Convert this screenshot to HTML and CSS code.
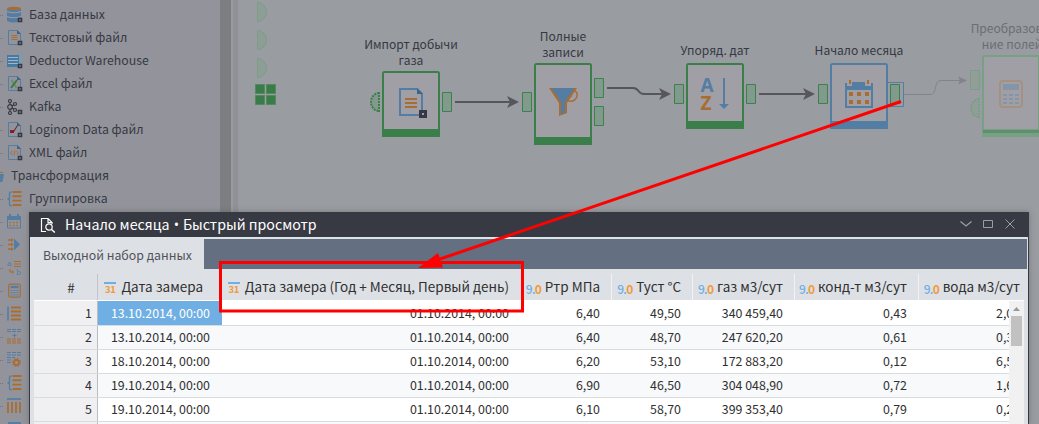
FILE: index.html
```html
<!DOCTYPE html>
<html lang="ru"><head><meta charset="utf-8"><title>Начало месяца</title><link rel="stylesheet" href="styles.css"></head>
<body>
<svg width="0" height="0" class="defs"><defs>
<g id="corner"><path d="M11.5 11.5h3v3h-3z" fill="#8d8f98" stroke="#363943" stroke-width="1.6"/></g>
<g id="file"><path d="M1.5 .5h9l3 3v11h-12z" fill="none" stroke="#537da3"/><path d="M10 0v4h4z" fill="#3d6689"/></g>
<g id="group"><path d="M4.500 1Q2.500 1 2.500 3V6Q2.500 8 .5 8Q2.500 8 2.500 10V13Q2.500 15 4.500 15" fill="none" stroke="#537da3" stroke-width="1.300"/><path d="M5.500 1h9M5.500 5.200h9M5.500 9.600h9M5.500 14h9" stroke="#a86d32" stroke-width="1.900"/></g>
<g id="calc"><rect x="1.700" y="1.200" width="11.600" height="13" rx="1.500" fill="none" stroke="#a86d32" stroke-width="1.200"/><path d="M3.500 4h8" stroke="#537da3" stroke-width="2.500"/><path d="M3.500 7.500h8M3.500 9.700h8M3.500 12h8" stroke="#537da3" stroke-width="1.200" stroke-dasharray="2 1"/></g>
</defs></svg>
<main class="app">
<aside class="tree">
<ul class="items">
<li class="cut"><svg class="ic" viewBox="0 0 16 16"><ellipse cx="7" cy="13" rx="4" ry="2.500" fill="#a99645"/></svg></li>
<li><svg class="ic" viewBox="0 0 16 16"><path d="M0 2v12q7 3 14 0V2z" fill="#537da3"/><ellipse cx="7" cy="1.500" rx="7" ry="1.700" fill="#a86d32"/><path d="M0 4.500q7 2.500 14 0M0 9.500q7 2.500 14 0" fill="none" stroke="#9a9ca4" stroke-width="1.200"/><use href="#corner"/></svg>База данных</li>
<li><svg class="ic" viewBox="0 0 16 16"><use href="#file"/><path d="M4.500 5.500h6M4.500 7.500h6M4.500 9.500h6" stroke="#a86d32" stroke-width="1.200"/><use href="#corner"/></svg>Текстовый файл</li>
<li><svg class="ic" viewBox="0 0 16 16"><path d="M0 2h12v12H0z" fill="#457ba4"/><path d="M12 2l2-2v12l-2 2z" fill="#6fa0b8"/><path d="M1 4.500h10M1 7.500h10M1 10.500h10" stroke="#a3b5c2"/><use href="#corner"/></svg>Deductor Warehouse</li>
<li><svg class="ic" viewBox="0 0 16 16"><use href="#file"/><path d="M4.500 4l5 8" stroke="#6d9354" stroke-width="2"/><path d="M10 4l-6 8" stroke="#3e7457" stroke-width="2"/><use href="#corner"/></svg>Excel файл</li>
<li><svg class="ic" viewBox="0 0 16 16"><g fill="none" stroke="#363943" stroke-width="1.200"><circle cx="3" cy="8" r="2.300"/><circle cx="3" cy="2" r="1.500"/><circle cx="3" cy="14" r="1.500"/><circle cx="8" cy="5" r="1.500"/><circle cx="8" cy="11" r="1.500"/><path d="M3 3.500v2M3 10.300v2M5 7l1.700-1M5 9l1.700 1"/></g><use href="#corner"/></svg>Kafka</li>
<li><svg class="ic" viewBox="0 0 16 16"><use href="#file"/><path d="M3 8h4v3H3z" fill="#841e2c"/><path d="M6 10.500l4.500-7" stroke="#841e2c" stroke-width="1.100"/><use href="#corner"/></svg>Loginom Data файл</li>
<li><svg class="ic" viewBox="0 0 16 16"><use href="#file"/><path d="M5.500 6l-2 2 2 2M9.500 6l2 2-2 2M8 5.500l-1 5" fill="none" stroke="#a86d32"/><use href="#corner"/></svg>XML файл</li>
<li class="folder"><svg class="fic" viewBox="0 0 4 14"><path d="M0 3h3v1H0z" fill="#a86d32"/><path d="M0 5h4L2.500 13H0z" fill="#537da3"/></svg>Трансформация</li>
<li><svg class="ic" viewBox="0 0 16 16"><use href="#group"/></svg>Группировка</li>
<li><svg class="ic" viewBox="0 0 16 16"><path d="M.5 3h13v11H.5z" fill="none" stroke="#537da3"/><path d="M0 2h14v4H0zM2 0h2v2H2zM10 0h2v2h-2z" fill="#537da3"/><path d="M2.500 8.500h10M2.500 11.500h10" stroke="#a86d32" stroke-width="1.700" stroke-dasharray="1.700 1.700"/></svg></li>
<li><svg class="ic" viewBox="0 0 16 16"><path d="M7 1.500l6 6-6 6z" fill="#537da3"/><path d="M1 3h5M1 7.500h5M1 12h5" stroke="#a86d32" stroke-width="1.500"/><path d="M4 1l2.500 2L4 5zM4 5.500l2.500 2L4 9.500zM4 10l2.500 2L4 14z" fill="#a86d32"/></svg></li>
<li><svg class="ic" viewBox="0 0 16 16"><path d="M7 1.500h7M7 4h7M7 6.500h7M3 9v3h3" fill="none" stroke="#a86d32" stroke-width="1.200"/><path d="M5 10l2 2-2 2z" fill="#a86d32"/><text x="0" y="6" class="mini">a</text><text x="9" y="15" class="mini">b</text></svg></li>
<li><svg class="ic" viewBox="0 0 16 16"><use href="#calc"/></svg></li>
<li><svg class="ic" viewBox="0 0 16 16"><path d="M1 .5v14" stroke="#537da3" stroke-width="1.600"/><path d="M4 1.500h10M4 5.500h10M4 9.500h10M4 13.500h10" stroke="#a86d32" stroke-width="1.800"/></svg></li>
<li><svg class="ic" viewBox="0 0 16 16"><path d="M0 .5h14M0 2.500h14M7.500 4.500v4M5.500 6.500h4" stroke="#537da3" stroke-dasharray="4 1"/><path d="M0 10h14M0 12h14M0 14h14" stroke="#a86d32" stroke-width="1.200" stroke-dasharray="4 1"/></svg></li>
<li><svg class="ic" viewBox="0 0 16 16"><path d="M0 .5h14M0 3h14M0 5.500h8M0 8h5M0 10.500h4" stroke="#537da3" stroke-dasharray="4 1"/><circle cx="9.500" cy="10.500" r="2.500" fill="none" stroke="#a86d32" stroke-width="1.800"/><circle cx="9.500" cy="10.500" r="3.800" fill="none" stroke="#a86d32" stroke-width="1.300" stroke-dasharray="1.500 1.480"/></svg></li>
<li><svg class="ic" viewBox="0 0 16 16"><use href="#group"/></svg></li>
<li><svg class="ic" viewBox="0 0 16 16"><path d="M0 1h14" stroke="#537da3" stroke-width="1.700"/><path d="M1 4v11M5 4v11M9 4v11M13 4v11" stroke="#a86d32" stroke-width="1.800"/></svg></li>
<li><svg class="ic" viewBox="0 0 16 16"><path d="M1 2h13" stroke="#537da3" stroke-width="2"/></svg></li>
</ul>
</aside>
<div class="track"></div><div class="gutter"></div>
<section class="canvas">
<svg class="wires" viewBox="239 0 800 424" width="800" height="424">
<defs>
<path id="half" d="M257.500 2.500v19a9 9.500 0 0 0 0-19z" fill="#8f9d97" stroke="#77a084"/>
</defs>
<use href="#half"/><use href="#half" y="28"/><use href="#half" y="56"/>
<path d="M255.500 84.500h9v9h-9zM266.500 84.500h9v9h-9zM255.500 95.500h9v9h-9zM266.500 95.500h9v9h-9z" fill="#3a7c49" stroke="#52895f"/>
<g fill="#a09fa6">
<path d="M383 75v-1.500q0-1.500 1.500-1.500h53q1.500 0 1.500 1.500V135h-56z" stroke="#3a7f4a" stroke-width="2"/>
<path d="M535 67v-1.500q0-1.500 1.500-1.500h53q1.500 0 1.500 1.500V143h-56z" stroke="#3a7f4a" stroke-width="2"/>
<path d="M687 67v-1.500q0-1.500 1.500-1.500h53q1.500 0 1.500 1.500V127h-56z" stroke="#3a7f4a" stroke-width="2"/>
<path d="M831 67v-1.500q0-1.500 1.500-1.500h53q1.500 0 1.500 1.500V127h-56z" stroke="#537da3" stroke-width="2"/>
<path d="M983 59v-1.500q0-1.500 1.500-1.500h53q1.500 0 1.500 1.500V135h-56z" stroke="#77a084" stroke-width="2"/></g>
<path d="M382 129h58v8h-58zM534 137h58v8h-58zM686 121h58v8h-58z" fill="#3a7f4a"/>
<path d="M830 121h58v8h-58z" fill="#537da3"/><path d="M982 129h58v8h-58z" fill="#77a084"/><path d="M983 130h57v3h-57z" fill="#5f8f6c"/>
<g fill="#82998d" stroke="#3a8249"><path d="M442.500 92.500h9v19h-9zM522.500 92.500h9v19h-9zM594.500 78.500h9v19h-9zM594.500 106.500h9v19h-9zM674.500 84.500h9v19h-9zM746.500 84.500h9v19h-9zM818.500 84.500h9v19h-9zM890.500 84.500h9v19h-9z"/></g>
<path d="M888 82.500h15.500v24H888" fill="none" stroke="#537da3"/>
<path d="M970.500 70.500h9v19h-9z" fill="#929d99" stroke="#77a084"/>
<path d="M379 92v20M379 93a8 9 0 0 0 0 18" fill="#82998d" stroke="#3a7f4a" stroke-width="2" stroke-dasharray="2 1"/>
<path d="M979 98v20M979 99a8 9 0 0 0 0 18" fill="#929d99" stroke="#77a084" stroke-width="2" stroke-dasharray="2 1"/>
<g fill="none" stroke="#56565c" stroke-width="2"><path d="M455 102h55M607 88h26c7 0 4 6 11 6h18M759 94h47"/></g>
<g fill="#56565c"><path id="tip" d="M519 102l-12-6 3 6-3 6z"/><use href="#tip" x="152" y="-8"/><use href="#tip" x="296" y="-8"/></g>
<path d="M904 94.500h26c8 0 3-14 11-14h22" fill="none" stroke="#838489"/><path d="M967 80.500l-9-4 2 4-2 4z" fill="#838489"/>
<path d="M400 89h17l5 5v21h-22z" fill="none" stroke="#537da3" stroke-width="2"/><path d="M417 88v6h6z" fill="#3d6689"/><path d="M405 99h12M405 103h12M405 107h12" stroke="#a86d32" stroke-width="2"/><path d="M420.500 111.500h5v5h-5z" fill="#a09fa6" stroke="#363943" stroke-width="3"/>
<path d="M567 100.500c6 2.500 11-2 10-7q-1-3-4-3c-3 0-4 4-1 6" fill="none" stroke="#a86d32" stroke-width="1.500"/><path d="M549 88h28L567 103v10l-8 3V103z" fill="#a86d32"/><path d="M551.500 88h23L565 102v3.500l-4 2V102z" fill="#537da3"/><path d="M561 104h4v8.500l-4 2z" fill="#537da3"/>
<text x="700.500" y="92" class="letter" fill="#537da3">A</text><text x="700.500" y="110" class="letter" fill="#a86d32">Z</text><path d="M724 78v27" stroke="#537da3" stroke-width="2"/><path d="M719 104h10l-5 5z" fill="#537da3"/>
<path d="M846 83v24h26V83" fill="none" stroke="#537da3" stroke-width="2"/><path d="M845 86h28v4h-28zM852 82h13v5h-13z" fill="#537da3"/><path d="M849 80h2v4h-2zM867 80h2v4h-2z" fill="#a86d32"/><path d="M849 94h20M849 102h20" stroke="#a86d32" stroke-width="4" stroke-dasharray="4 4"/>
<rect x="1000" y="81" width="22" height="26" rx="3" fill="none" stroke="#a49181" stroke-width="2"/><path d="M1003 84h16v6h-16z" fill="#8495a7"/><path d="M1003 95h16M1003 99h16M1003 103h16" stroke="#8495a7" stroke-width="2" stroke-dasharray="4 2"/>
</svg>
<div class="label l1">Импорт добычи<br>газа</div><div class="label l2">Полные<br>записи</div><div class="label l3">Упоряд. дат</div><div class="label l4">Начало месяца</div><div class="label l5">Преобразова-<br>ние полей</div>
</section>
</main>
<section class="window">
<header class="title"><svg class="preview" width="16" height="16" viewBox="0 0 16 16" fill="none" stroke="#fff"><path d="M6 14.500H1.500v-13H8l4 4V7M8 1.500v4h4" stroke-width="1.200"/><circle cx="9" cy="10" r="3.200" stroke-width="1.200"/><path d="M11.300 12.300l3.500 3.200" stroke-width="1.500"/></svg><h1>Начало месяца <span class="dot">•</span> Быстрый просмотр</h1><svg class="controls" width="58" height="16" viewBox="0 0 58 16" fill="none" stroke="#9c9da0"><path d="M1.500 5.500l5.500 4.500 5.500-4.500" stroke-width="1.300"/><path d="M24.500 4.500h9v7h-9zM46.500 3.500l9 9M55.500 3.500l-9 9"/></svg></header>
<div class="tabs"><div class="tab">Выходной набор данных</div></div>
<div class="grid">
<div class="row head"><div class="num">#</div><div><i class="cal">31</i><span>Дата замера</span></div><div><i class="cal">31</i><span>Дата замера (Год + Месяц, Первый день)</span></div><div><i class="real">9.<b>0</b></i><span>Ртр МПа</span></div><div><i class="real">9.<b>0</b></i><span>Туст °C</span></div><div><i class="real">9.<b>0</b></i><span>газ м3/сут</span></div><div><i class="real">9.<b>0</b></i><span>конд-т м3/сут</span></div><div><i class="real">9.<b>0</b></i><span>вода м3/сут</span></div></div>
<div class="row first"><div class="num">1</div><div class="selected">13.10.2014, 00:00</div><div>01.10.2014, 00:00</div><div>6,40</div><div>49,50</div><div>340 459,40</div><div>0,43</div><div class="last">2,0</div></div>
<div class="row alt"><div class="num">2</div><div>13.10.2014, 00:00</div><div>01.10.2014, 00:00</div><div>6,40</div><div>48,70</div><div>247 620,20</div><div>0,61</div><div class="last">0,3</div></div>
<div class="row"><div class="num">3</div><div>18.10.2014, 00:00</div><div>01.10.2014, 00:00</div><div>6,20</div><div>53,10</div><div>172 883,20</div><div>0,12</div><div class="last">6,5</div></div>
<div class="row alt"><div class="num">4</div><div>19.10.2014, 00:00</div><div>01.10.2014, 00:00</div><div>6,90</div><div>46,50</div><div>304 048,90</div><div>0,72</div><div class="last">1,6</div></div>
<div class="row"><div class="num">5</div><div>19.10.2014, 00:00</div><div>01.10.2014, 00:00</div><div>6,10</div><div>58,70</div><div>399 353,40</div><div>0,79</div><div class="last">0,2</div></div>
<div class="row alt"><div class="num"></div><div></div><div></div><div></div><div></div><div></div><div></div><div></div></div>
<div class="scroll"><svg width="15" height="15"><path d="M4 10l3.500-4L11 10z" fill="#999"/></svg><div class="thumb"></div></div>
</div>
</section>
<svg class="callout" width="1039" height="424"><path d="M901 101.500L440 259" stroke="#f00" stroke-width="3"/><path d="M418 268l20-15 5 14.500z" fill="#f00"/><rect x="220.500" y="262.500" width="302" height="48.500" fill="none" stroke="#f00" stroke-width="3"/></svg>
</body></html>
```
FILE: styles.css
```css
* { box-sizing: border-box; }
body { margin: 0; width: 1039px; height: 424px; overflow: hidden; position: relative; font: 12.4px "Noto Sans CJK SC", "Noto Sans", sans-serif; color: #363943; }
.defs { position: absolute; }
.app { display: flex; height: 424px; overflow: hidden; }
.tree { width: 220px; background: #93949b; overflow: hidden; font-size: 12.3px; }
.items { list-style: none; margin: -20px 0 0; padding: 0; }
.items li { height: 23px; display: flex; align-items: center; gap: 6px; padding: 0 0 1px 7px; white-space: nowrap; background: linear-gradient(90deg, #73757c 1px, transparent 1px 2px, #73757c 2px 3px, transparent 3px) 0 12px / 100% 1px no-repeat; line-height: 22px; }
.items .folder { padding-left: 0; gap: 7px; background: none; }
.ic { width: 16px; height: 16px; flex: none; overflow: visible; margin-top: 2px; }
.fic { width: 4px; height: 14px; flex: none; margin-top: 2px; }
.mini { font: 8px "DejaVu Serif"; fill: #537da3; }
.track { width: 11px; background: #7c7e81; }
.gutter { width: 8px; background: #8f9196; border-left: 2px solid #989a9e; border-right: 1px solid #989a9e; }
.canvas { flex: 1; position: relative; background: #999ca1; overflow: hidden; }
.wires { display: block; }
.letter { font: bold 19px "Open Sans", sans-serif; }
.label { position: absolute; transform: translateX(-50%); text-align: center; white-space: nowrap; line-height: 16px; font-size: 12.05px; }
.l1 { left: 172px; top: 36px; }
.l2 { left: 324px; top: 28px; }
.l3 { left: 476px; top: 42px; }
.l4 { left: 620px; top: 42px; }
.l5 { left: 773px; top: 20px; color: #6c6e75; }
.window { position: absolute; left: 29px; top: 212px; width: 1000px; height: 212px; background: #dde0e5; border: solid #383a43; border-width: 0 1px; box-shadow: 0 0 5px #5558; overflow: hidden; }
.title { height: 25px; background: #383a43; color: #fff; display: flex; align-items: center; padding: 0 11px 0 10px; gap: 9px; }
.controls { margin-bottom: 2px; }
h1 { margin: 0; font-size: 14.2px; font-weight: 400; line-height: 25px; flex: 1; }
.dot { display: inline-block; width: 5px; margin: 0 1px; font-family: "Open Sans", sans-serif; line-height: 1; }
.tabs { height: 32px; border-top: 2px solid #dce4e8; margin-right: 1px; background: #646f81; display: flex; }
.tab { width: 174px; background: #dde0e5; padding-left: 13px; line-height: 33px; height: 30px; color: #50535b; white-space: nowrap; font-size: 12.3px; }
.grid { position: relative; margin: 0 4px; height: 155px; overflow: hidden; }
.row { display: grid; grid-template-columns: 64px 124px 301px 89px 81px 102px 124px 1fr; height: 24px; line-height: 23px; background: #fff; border-bottom: 1px solid #d8dce1; }
.row > div { text-align: right; padding-right: 12px; white-space: nowrap; color: #303030; }
.row > div:nth-child(3) { padding-right: 14px; }
.row.first { height: 25px; line-height: 24px; }
.row.alt { background: #f7f9fb; }
.row > .num { background: #f0f0f2; border-right: 1px solid #b9bdc4; padding-right: 5px; }
.row > .selected { background: #70afe3; color: #fff; }
.row > .last { text-align: left; padding: 0 0 0 77px; }
.row.head { height: 32px; font-size: 13.5px; background: #dde0e5; border-bottom: 1px solid #fff; }
.row.head > div { display: flex; justify-content: flex-end; align-items: center; gap: 5px; border-right: 1px solid #f0f2f4; margin-top: 5px; height: 26px; padding-right: 11px; color: #303030; }
.row.head > div:nth-child(3) { padding-right: 13px; }
.row.head > div:nth-child(2) { padding-right: 18px; }
.row.head > div:last-child { border: 0; padding-right: 4px; }
.row.head > .num { justify-content: center; background: none; padding: 0 0 0 11px; border-color: #c1c5cb; }
.row.head span { line-height: 24px; padding-bottom: 2px; }
.cal { font: bold 9.5px/11px "Noto Sans CJK SC", sans-serif; color: #f09a3b; border-top: 2px solid #70afe3; width: 12px; height: 12px; display: flex; justify-content: center; letter-spacing: -.3px; margin-top: 2px; }
.real { font: 500 12px/14px "Noto Sans CJK SC", sans-serif; color: #70afe3; width: 14px; letter-spacing: -.7px; padding-top: 3px; }
.real b { color: #f09a3b; font-weight: 700; }
.scroll { position: absolute; right: 0; top: 32px; width: 15px; bottom: 0; background: #f1f1f1; }
.scroll svg { display: block; }
.thumb { width: 11px; height: 30px; margin-left: 2px; background: #c1c1c1; }
.callout { position: absolute; left: 0; top: 0; }
```
